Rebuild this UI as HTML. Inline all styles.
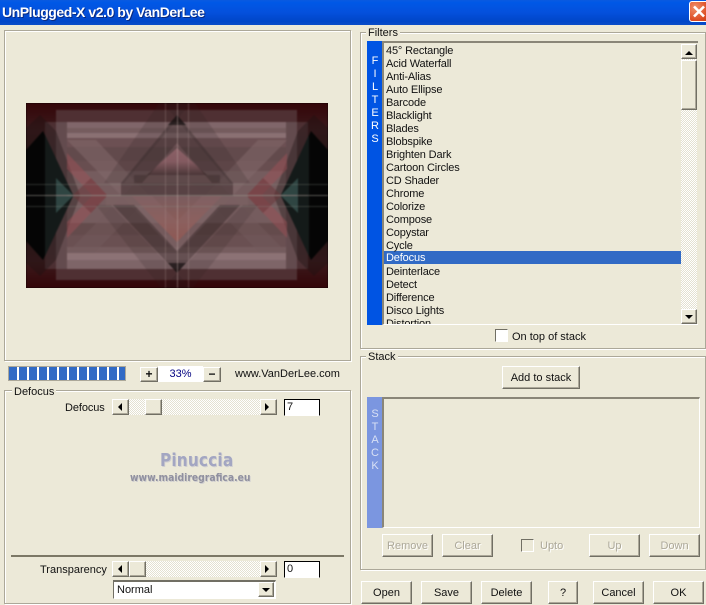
<!DOCTYPE html>
<html><head><meta charset="utf-8"><style>
html,body{margin:0;padding:0;background:#ece9d8}
#r{position:relative;width:706px;height:605px;overflow:hidden;background:#ece9d8;font:11px/13px "Liberation Sans",sans-serif;color:#111}
#r div{position:absolute;box-sizing:border-box;white-space:nowrap}
.g{border:1px solid #aca899;box-shadow:inset 1px 1px 0 #fff,1px 1px 0 #fff}
.l{background:#ece9d8;padding:0 2px;height:13px}
.b{background:#ece9d8;border:1px solid;border-color:#fff #716f64 #716f64 #fff;box-shadow:inset -1px -1px 0 #aca899;text-align:center;line-height:22px}
.d{color:#aca899;text-shadow:1px 1px 0 #fff}
.t{background:repeating-conic-gradient(#fff 0 25%,#e4e1d1 0 50%) 0 0/2px 2px}
.a{width:0;height:0;border:4px solid transparent}
.e{background:#fff;border:1px solid;border-color:#000 #000 #fff #000;padding-left:2px;line-height:15px}
.c{background:#fff;border:1px solid;border-color:#716f64 #fff #fff #716f64}
.i{left:386px;height:13px;line-height:13px;letter-spacing:-.15px}
.v{color:#fff;width:16px;text-align:center;font-size:11px}
</style></head><body><div id="r">

<div style="left:0;top:0;width:706px;height:25px;background:linear-gradient(#0a5ae0 0,#0058e6 10%,#0450dc 50%,#0046c8 85%,#0a4cc8 100%)"></div>
<div style="left:2px;top:4px;color:#fff;font:bold 14px/17px 'Liberation Sans',sans-serif;letter-spacing:-.45px;text-shadow:1px 1px 0 #0a2a80">UnPlugged-X v2.0 by VanDerLee</div>
<div style="left:689px;top:1px;width:20px;height:21px;background:radial-gradient(circle at 30% 30%,#f0906a,#dc4a22 70%,#c8401a);border:1px solid #fff;border-radius:3px"></div>
<svg style="position:absolute;left:692px;top:5px" width="14" height="13"><path d="M2 1.5L12 11.5M12 1.5L2 11.5" stroke="#fff" stroke-width="2.6"/></svg>

<div class="g" style="left:4px;top:30px;width:347px;height:331px"></div>

<div style="left:26px;top:103px;width:302px;height:185px;overflow:hidden;background:#000">
<svg style="position:absolute;left:0;top:0;filter:blur(.8px)" width="302" height="185" viewBox="0 0 302 185">
<defs>
<linearGradient id="bg" x1="0" y1="0" x2="0" y2="1"><stop offset="0" stop-color="#340508"/><stop offset=".15" stop-color="#3a1a1c"/><stop offset=".5" stop-color="#181212"/><stop offset=".85" stop-color="#3a1a1c"/><stop offset="1" stop-color="#340508"/></linearGradient>
<linearGradient id="up" x1="0" y1="0" x2="0" y2="1"><stop offset="0" stop-color="#8a6066"/><stop offset=".5" stop-color="#835a60"/><stop offset="1" stop-color="#4a3637"/></linearGradient>
<linearGradient id="dn" x1="0" y1="0" x2="0" y2="1"><stop offset="0" stop-color="#7a5c5e"/><stop offset=".55" stop-color="#8a5c58"/><stop offset="1" stop-color="#8e5048"/></linearGradient>
<g id="q">
<polygon points="0,25 14,12 30,28 54,92 0,92" fill="#1a1010" opacity=".35"/>
<polygon points="0,47 17,28 47,92 0,92" fill="#050505"/>
<polygon points="19,32 47,92 19,92" fill="#141a19"/>
<polygon points="30,75 47,92 30,92" fill="#2f4542"/>
<polygon points="41,50 81,92 66,92 41,66" fill="#9c5056" opacity=".5"/>
<polygon points="47,92 65,75 81,92" fill="#6a3438" opacity=".5"/>
</g>
</defs>
<rect width="302" height="185" fill="url(#bg)"/>
<rect x="30" y="7" width="241" height="12" fill="#4f3033"/>
<rect x="30" y="166" width="241" height="11" fill="#4f3033"/>
<rect x="30" y="19" width="241" height="147" fill="#6a5254"/>
<rect x="19" y="19" width="263" height="147" fill="#5c4648" opacity=".55"/>
<rect x="41" y="19" width="219" height="147" fill="#755c5e"/>
<rect x="41" y="19" width="219" height="6" fill="#80666a"/>
<rect x="41" y="30" width="219" height="5" fill="#8a7073"/>
<rect x="41" y="35" width="219" height="9" fill="#6c5053"/>
<rect x="41" y="44" width="219" height="14" fill="#624a4c"/>
<rect x="41" y="58" width="219" height="10" fill="#684e50"/>
<rect x="41" y="120" width="219" height="12" fill="#644b4c"/>
<rect x="41" y="132" width="219" height="12" fill="#6a5052"/>
<rect x="41" y="150" width="219" height="7" fill="#8c7275"/>
<rect x="41" y="157" width="219" height="9" fill="#7e6568"/>
<use href="#q"/>
<use href="#q" transform="translate(302,0) scale(-1,1)"/>
<use href="#q" transform="translate(0,185) scale(1,-1)"/>
<use href="#q" transform="translate(302,185) scale(-1,-1)"/>
<polygon points="41,37 151,150 151,122 70,37" fill="#846a6c" opacity=".5"/>
<polygon points="261,37 151,150 151,122 232,37" fill="#846a6c" opacity=".5"/>
<polygon points="41,150 120,69 147,69 68,150" fill="#745c5e" opacity=".45"/>
<polygon points="261,150 182,69 155,69 234,150" fill="#745c5e" opacity=".45"/>
<rect x="95" y="80" width="112" height="13" fill="#3f2d2f" opacity=".55"/>
<rect x="80" y="93" width="142" height="10" fill="#7a6062" opacity=".85"/>
<polygon points="151,45 181,72 121,72" fill="url(#up)"/>
<rect x="108" y="72" width="86" height="8" fill="#473536" opacity=".5"/>
<polygon points="151,12 207,80 186,80 151,40 116,80 95,80" fill="#2c2020" opacity=".36"/>
<polygon points="133,0 165,0 98,80 78,80" fill="#2a1f20" opacity=".18"/>
<polygon points="169,0 137,0 204,80 224,80" fill="#2a1f20" opacity=".18"/>
<polygon points="106,93 196,93 151,139" fill="url(#dn)"/>
<polygon points="151,139 196,93 176,93 151,118 126,93 106,93" fill="#8f6a6c" opacity=".3"/>
<polygon points="151,170 214,102 194,102 151,148 108,102 87,102" fill="#2a1f1f" opacity=".4"/>
<polygon points="135,185 165,185 85,102 70,102" fill="#2a1f20" opacity=".16"/>
<polygon points="167,185 137,185 217,102 232,102" fill="#2a1f20" opacity=".16"/>
<polygon points="151,12 142,22 160,22" fill="#151010" opacity=".7"/>
<polygon points="151,170 142,160 160,160" fill="#151010" opacity=".7"/>
<g stroke-width="1">
<path d="M0 81.5H302M0 103.5H302" stroke="#8a8f85" opacity=".3"/>
<path d="M0 92.5H302" stroke="#a9aba0" opacity=".45"/>
<path d="M139.5 0V185M162.5 0V185" stroke="#b39a98" opacity=".3"/>
<path d="M151.5 0V185" stroke="#c2aca8" opacity=".45"/>
</g>
</svg>
</div>

<div style="left:8px;top:366px;width:118px;height:15px;background:#fff;border:1px solid #aca899"></div>
<div style="left:9px;top:367px;width:116px;height:13px;background:repeating-linear-gradient(90deg,#316ac5 0 8px,#fff 8px 10px)"></div>
<div class="b" style="left:140px;top:367px;width:18px;height:15px;font:bold 12px/12px 'Liberation Sans',sans-serif">+</div>
<div style="left:158px;top:366px;width:45px;height:16px;background:#fff;color:#000080;text-align:center;line-height:15px;padding-top:1px">33%</div>
<div class="b" style="left:203px;top:367px;width:18px;height:15px;font:bold 12px/12px 'Liberation Sans',sans-serif">−</div>
<div style="left:235px;top:368px">www.VanDerLee.com</div>

<div class="g" style="left:4px;top:390px;width:347px;height:214px"></div>
<div class="l" style="left:12px;top:386px">Defocus</div>
<div style="left:65px;top:402px;letter-spacing:-.1px">Defocus</div>

<div class="t" style="left:129px;top:399px;width:131px;height:16px"></div>
<div class="b" style="left:112px;top:399px;width:17px;height:16px"></div><div class="a" style="left:114px;top:403px;border-right-color:#000"></div>
<div class="b" style="left:145px;top:399px;width:17px;height:16px"></div>
<div class="b" style="left:260px;top:399px;width:17px;height:16px"></div><div class="a" style="left:265px;top:403px;border-left-color:#000"></div>
<div class="e" style="left:284px;top:399px;width:36px;height:17px">7</div>

<div style="left:160px;top:450px;color:#a3a6c2;font:bold 18px/22px 'DejaVu Sans',sans-serif;letter-spacing:.2px;transform-origin:0 0;transform:scale(.85,1);text-shadow:1px 1px 0 #d0cfd0">Pinuccia</div>
<div style="left:130px;top:471px;color:#90909f;font:bold 11px/14px 'DejaVu Sans',sans-serif;transform-origin:0 0;transform:scale(.84,1);text-shadow:1px 1px 0 #d0cfd0">www.maidiregrafica.eu</div>

<div style="left:11px;top:555px;width:333px;height:2px;background:#7c7866"></div>
<div style="left:40px;top:564px">Transparency</div>
<div class="t" style="left:129px;top:561px;width:131px;height:16px"></div>
<div class="b" style="left:112px;top:561px;width:17px;height:16px"></div><div class="a" style="left:114px;top:565px;border-right-color:#000"></div>
<div class="b" style="left:129px;top:561px;width:17px;height:16px"></div>
<div class="b" style="left:260px;top:561px;width:17px;height:16px"></div><div class="a" style="left:265px;top:565px;border-left-color:#000"></div>
<div class="e" style="left:284px;top:561px;width:36px;height:17px">0</div>
<div class="c" style="left:113px;top:580px;width:163px;height:19px;border-width:2px 1px 1px 1px;padding-left:3px;line-height:17px">Normal</div>
<div class="b" style="left:258px;top:582px;width:16px;height:15px"></div><div class="a" style="left:262px;top:588px;border-top-color:#000"></div>

<div class="g" style="left:360px;top:32px;width:346px;height:317px"></div>
<div class="l" style="left:366px;top:27px">Filters</div>
<div style="left:367px;top:41px;width:15px;height:284px;background:#0054e3"></div>
<div style="left:382px;top:41px;width:316px;height:284px;background:#ece9d8;border:1px solid;border-width:2px 0 1px 2px;border-color:#8a8678 #fff #fff #8a8678;overflow:hidden"></div>
<div style="left:384px;top:251px;width:297px;height:13px;background:#316ac5"></div>
<div class="i" style="top:45px">45° Rectangle</div><div class="i" style="top:58px">Acid Waterfall</div><div class="i" style="top:71px">Anti-Alias</div><div class="i" style="top:84px">Auto Ellipse</div><div class="i" style="top:97px">Barcode</div><div class="i" style="top:110px">Blacklight</div><div class="i" style="top:123px">Blades</div><div class="i" style="top:136px">Blobspike</div><div class="i" style="top:149px">Brighten Dark</div><div class="i" style="top:162px">Cartoon Circles</div><div class="i" style="top:175px">CD Shader</div><div class="i" style="top:188px">Chrome</div><div class="i" style="top:201px">Colorize</div><div class="i" style="top:214px">Compose</div><div class="i" style="top:227px">Copystar</div><div class="i" style="top:240px">Cycle</div><div class="i" style="top:252px;color:#fff">Defocus</div><div class="i" style="top:266px">Deinterlace</div><div class="i" style="top:279px">Detect</div><div class="i" style="top:292px">Difference</div><div class="i" style="top:305px">Disco Lights</div><div class="i" style="top:318px;height:6px;overflow:hidden">Distortion</div>
<div class="v" style="left:367px;top:55px;line-height:13px">F<br>I<br>L<br>T<br>E<br>R<br>S</div>
<div class="t" style="left:681px;top:44px;width:16px;height:280px"></div>
<div class="b" style="left:681px;top:44px;width:16px;height:15px"></div><div class="a" style="left:685px;top:47px;border-bottom-color:#000"></div>
<div class="b" style="left:681px;top:60px;width:16px;height:50px"></div>
<div class="b" style="left:681px;top:309px;width:16px;height:15px"></div><div class="a" style="left:685px;top:315px;border-top-color:#000"></div>
<div class="c" style="left:495px;top:329px;width:13px;height:13px"></div>
<div style="left:512px;top:331px">On top of stack</div>

<div class="g" style="left:360px;top:356px;width:346px;height:214px"></div>
<div class="l" style="left:366px;top:351px">Stack</div>
<div class="b" style="left:502px;top:366px;width:78px;height:23px">Add to stack</div>
<div style="left:367px;top:397px;width:15px;height:131px;background:#7b96e0"></div>
<div style="left:382px;top:397px;width:318px;height:131px;border:1px solid;border-width:2px 1px 1px 2px;border-color:#8a8678 #fff #fff #8a8678"></div>
<div class="v" style="left:367px;top:408px;line-height:13px;color:#d8e0f4">S<br>T<br>A<br>C<br>K</div>
<div class="b d" style="left:382px;top:534px;width:51px;height:23px">Remove</div>
<div class="b d" style="left:442px;top:534px;width:51px;height:23px">Clear</div>
<div class="c" style="left:521px;top:539px;width:13px;height:13px;background:#ece9d8"></div>
<div class="d" style="left:540px;top:540px">Upto</div>
<div class="b d" style="left:589px;top:534px;width:51px;height:23px">Up</div>
<div class="b d" style="left:649px;top:534px;width:51px;height:23px">Down</div>

<div class="b" style="left:361px;top:581px;width:51px;height:23px">Open</div>
<div class="b" style="left:421px;top:581px;width:51px;height:23px">Save</div>
<div class="b" style="left:481px;top:581px;width:51px;height:23px">Delete</div>
<div class="b" style="left:548px;top:581px;width:30px;height:23px">?</div>
<div class="b" style="left:593px;top:581px;width:51px;height:23px">Cancel</div>
<div class="b" style="left:653px;top:581px;width:51px;height:23px">OK</div>
</div></body></html>
